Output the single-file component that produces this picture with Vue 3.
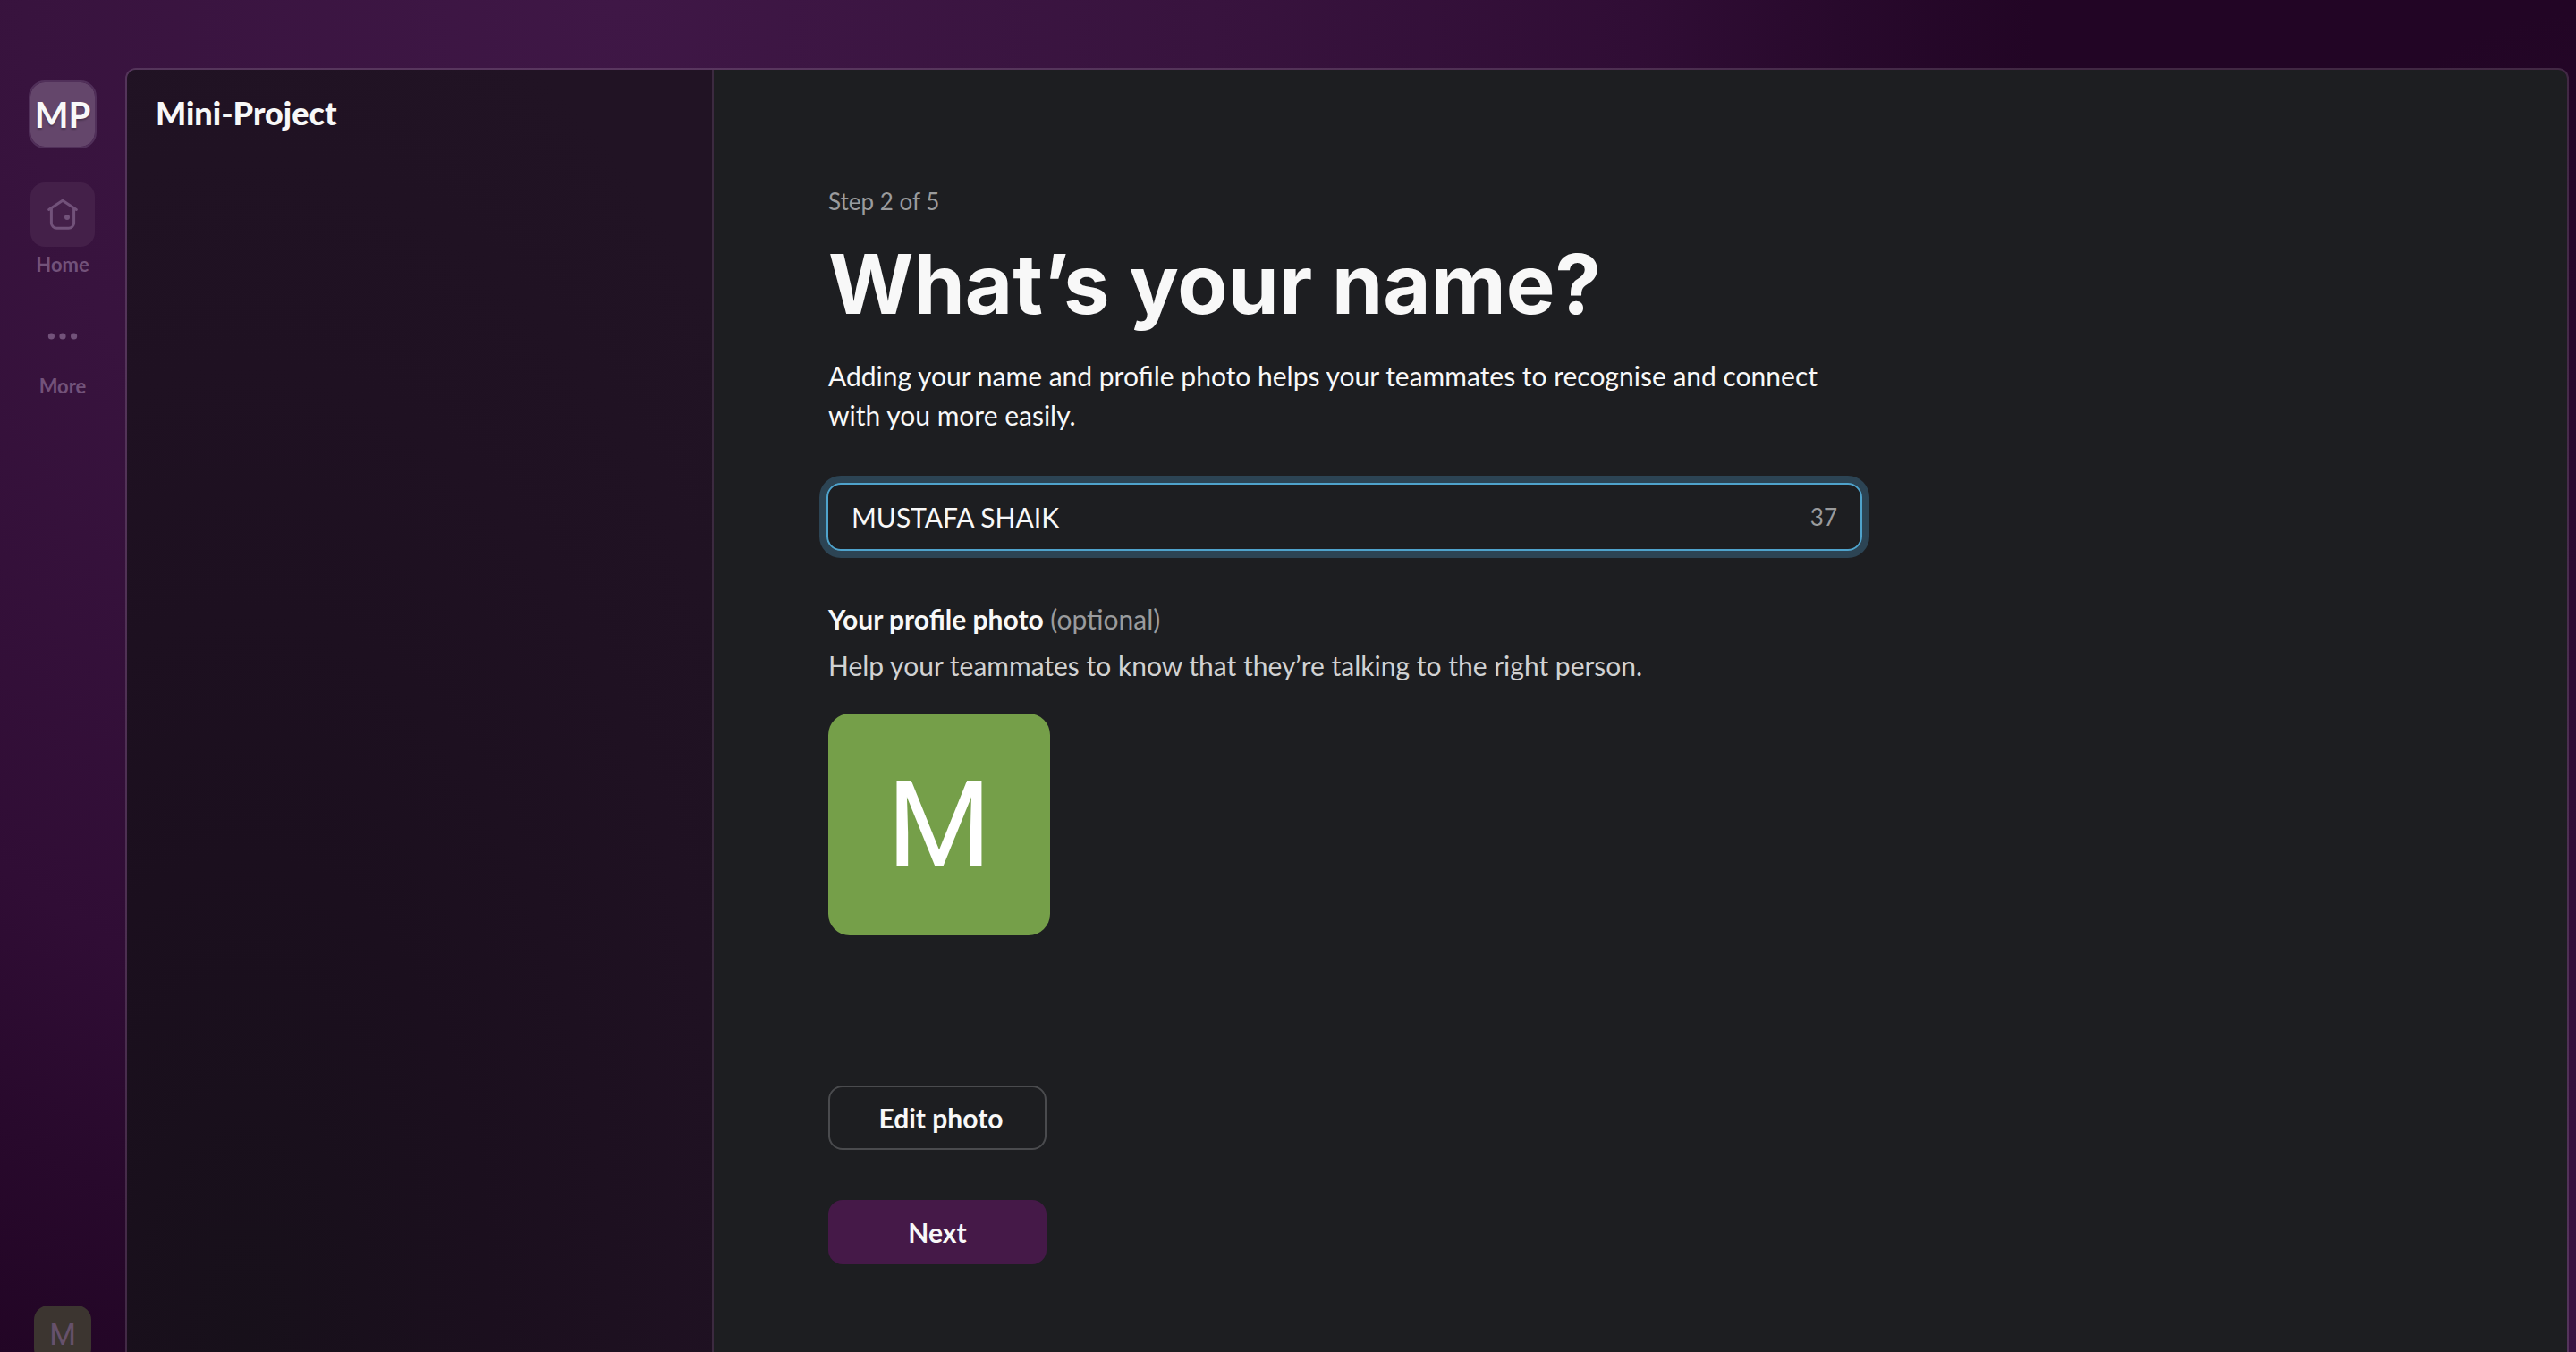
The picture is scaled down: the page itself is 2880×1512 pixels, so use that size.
<script setup>
import { ref, computed } from 'vue'

const name = ref('MUSTAFA SHAIK')
const maxLength = 50
const remaining = computed(() => maxLength - name.value.length)
</script>

<template>
  <div class="app">
    <nav class="rail" aria-label="Workspace">
      <button class="workspace" type="button">MP</button>
      <button class="rail-item" type="button">
        <span class="rail-icon active">
          <svg viewBox="0 0 20 20" width="40" height="40" fill="none" stroke="currentColor" stroke-width="1.5" stroke-linecap="round" stroke-linejoin="round" aria-hidden="true">
            <path d="M2.3 7.2 10 2.1l7.7 5.1" />
            <path d="M3.7 6.6v8a3 3 0 0 0 3 3h6.6a3 3 0 0 0 3-3v-8" />
            <circle cx="12.5" cy="11.5" r="1.5" fill="currentColor" stroke="none" />
          </svg>
        </span>
        <span class="rail-label">Home</span>
      </button>
      <button class="rail-item" type="button">
        <span class="rail-icon">
          <svg viewBox="0 0 20 20" width="40" height="40" fill="currentColor" aria-hidden="true">
            <circle cx="3.7" cy="10" r="1.8" />
            <circle cx="10" cy="10" r="1.8" />
            <circle cx="16.3" cy="10" r="1.8" />
          </svg>
        </span>
        <span class="rail-label">More</span>
      </button>
      <button class="user" type="button">M</button>
    </nav>

    <div class="panel">
      <aside class="sidebar">
        <h2 class="title">Mini-Project</h2>
      </aside>
      <main class="content">
        <form class="form" @submit.prevent>
          <p class="step">Step 2 of 5</p>
          <h1 class="heading"><label for="full-name">What’s your name?</label></h1>
          <p class="lead">Adding your name and profile photo helps your teammates to recognise and connect with you more easily.</p>
          <div class="field">
            <input id="full-name" v-model="name" type="text" :maxlength="maxLength" />
            <span class="count">{{ remaining }}</span>
          </div>
          <p class="photo-title"><strong>Your profile photo</strong> <span>(optional)</span></p>
          <p class="photo-help">Help your teammates to know that they’re talking to the right person.</p>
          <div class="photo">M</div>
          <button class="btn edit" type="button">Edit photo</button>
          <button class="btn next" type="submit">Next</button>
        </form>
      </main>
    </div>
  </div>
</template>

<style>
body {
  margin: 0;
  background: #230427;
}
</style>

<style scoped>
* {
  box-sizing: border-box;
}

.app {
  display: flex;
  height: 100vh;
  overflow: hidden;
  padding: 76px 8px 0 0;
  font-family: Lato, "Open Sans", sans-serif;
  color: #f8f8f8;
  background:
    radial-gradient(ellipse 600px 1500px at 100% 100%, #3a1342, rgba(58, 19, 66, 0)),
    radial-gradient(ellipse 64% 130% at 24% 0, #3f1746 0%, #38133e 36%, #300d35 62%, #28092c 74%, #220525 86%, #220525 100%);
}

button {
  padding: 0;
  border: 0;
  background: none;
  color: inherit;
  font-family: inherit;
}

h1,
h2,
p {
  margin: 0;
}

.rail {
  display: flex;
  flex-direction: column;
  align-items: center;
  flex: none;
  width: 140px;
  padding-top: 14px;
}

.workspace {
  flex: none;
  width: 76px;
  height: 76px;
  margin-bottom: 38px;
  border: 2px solid #51305a;
  border-radius: 18px;
  background: #64466b;
  background-clip: padding-box;
  font-size: 40px;
  font-weight: 700;
  text-shadow: 0 2px 2px rgba(0, 0, 0, 0.25);
}

.rail-item {
  display: flex;
  flex-direction: column;
  align-items: center;
  gap: 6px;
  height: 136px;
  color: #72527a;
}

.rail-icon {
  display: flex;
  align-items: center;
  justify-content: center;
  width: 72px;
  height: 72px;
  border-radius: 16px;
}

.rail-icon.active {
  background: #442049;
}

.rail-label {
  font-size: 22px;
  font-weight: 700;
  line-height: 28px;
}

.user {
  flex: none;
  width: 64px;
  height: 64px;
  margin-top: auto;
  margin-bottom: -12px;
  border-radius: 16px;
  background: #3c3530;
  color: #66516b;
  font-family: Roboto, sans-serif;
  font-size: 34px;
}

.panel {
  display: flex;
  flex: 1;
  min-width: 0;
  border: 2px solid rgba(255, 255, 255, 0.14);
  border-bottom: 0;
  border-radius: 12px 12px 0 0;
  background: #1d1e21;
  background-clip: padding-box;
}

.sidebar {
  flex: none;
  width: 656px;
  padding: 26px 32px;
  border-right: 2px solid #3c2a40;
  border-top-left-radius: 10px;
  background: radial-gradient(ellipse 120% 110% at 20% 100%, #17101a 0%, #1b0f1e 35%, #1f1122 70%, #211324 100%);
}

.title {
  font-size: 36px;
  font-weight: 900;
  line-height: 44px;
}

.content {
  flex: 1;
  min-width: 0;
  padding: 128px 128px 96px;
}

.form {
  display: flex;
  flex-direction: column;
  align-items: flex-start;
  max-width: 1156px;
}

.step {
  color: #9a9b9d;
  font-size: 26px;
  line-height: 38px;
}

.heading {
  margin-top: 24px;
  font-family: Inter, Lato, sans-serif;
  font-size: 92px;
  font-weight: 700;
  line-height: 100px;
  white-space: nowrap;
}

.lead {
  margin-top: 30px;
  font-size: 30px;
  line-height: 44px;
}

.field {
  display: flex;
  align-items: center;
  align-self: stretch;
  height: 76px;
  margin: 54px 0 0 -2px;
  padding: 0 26px;
  border: 2px solid #4fa3cc;
  border-radius: 16px;
  box-shadow: 0 0 0 8px #2c4454;
}

.field input {
  flex: 1;
  min-width: 0;
  padding: 0;
  border: 0;
  outline: 0;
  background: none;
  color: #f8f8f8;
  font-family: inherit;
  font-size: 30px;
}

.count {
  color: #9a9b9d;
  font-size: 26px;
}

.photo-title {
  margin-top: 54px;
  font-size: 30px;
  line-height: 44px;
}

.photo-title span {
  color: #9a9b9d;
}

.photo-help {
  margin-top: 8px;
  color: #d1d2d3;
  font-size: 30px;
  line-height: 44px;
}

.photo {
  display: flex;
  align-items: center;
  justify-content: center;
  width: 248px;
  height: 248px;
  margin-top: 32px;
  border-radius: 24px;
  background: #759f49;
  color: #fff;
  font-family: Roboto, sans-serif;
  font-size: 134px;
}

.btn {
  width: 244px;
  height: 72px;
  border-radius: 16px;
  font-size: 30px;
  font-weight: 700;
}

.edit {
  margin-top: 168px;
  padding-left: 8px;
  border: 2px solid #4a4b4e;
}

.next {
  margin-top: 56px;
  background: #451948;
}
</style>
